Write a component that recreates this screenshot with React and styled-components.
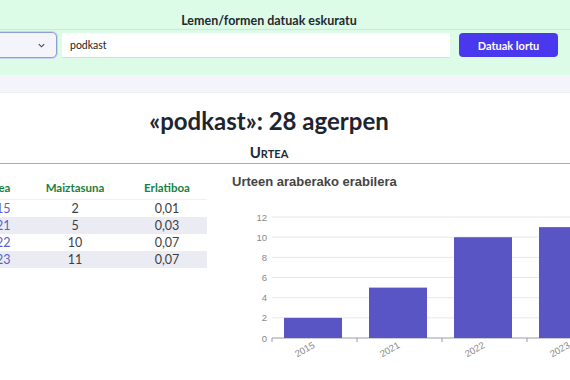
import React from "react";
import styled, { createGlobalStyle } from "styled-components";

const Global = createGlobalStyle`
  html, body { margin: 0; padding: 0; background: #fff; overflow: hidden; }
  body { width: 570px; height: 380px; font-family: "Lato", "Noto Sans", sans-serif; color: #1f2933; }
`;

const Page = styled.div`
  width: 640px;
  margin-left: -51px;
`;

const Header = styled.header`
  background: #dcfce7;
  padding: 13px 0 17px;
`;

const HeaderTitle = styled.h2`
  margin: 0;
  text-align: center;
  font-size: 12.5px;
  line-height: 15px;
  font-weight: 700;
  color: #1f2933;
`;

const FormRow = styled.form`
  display: flex;
  align-items: center;
  gap: 3px;
  margin-top: 1px;
  padding: 2px 31px 0;
  border-top: 1px solid #cfe8d6;
`;

const Select = styled.div`
  box-sizing: border-box;
  width: 77px;
  height: 26px;
  border: 1px solid #8e9fd6;
  border-radius: 5px;
  background: #f3f5fb;
  box-shadow: 0 0 0 1px #c9d3f2;
  display: flex;
  align-items: center;
  justify-content: flex-end;
  padding-right: 10px;
  color: #555;
`;

const Input = styled.div`
  box-sizing: border-box;
  flex: 1;
  height: 25px;
  margin-left: 2px;
  background: #fff;
  border-bottom: 1px solid #cfe0d6;
  display: flex;
  align-items: center;
  padding-left: 8px;
  font-size: 10.5px;
  color: #222;
`;

const Button = styled.button`
  box-sizing: border-box;
  width: 99px;
  height: 24px;
  margin-left: 6px;
  border: none;
  border-radius: 4px;
  background: #4a38ee;
  color: #fff;
  font-family: inherit;
  font-weight: 700;
  font-size: 11px;
`;

const Band = styled.div`
  height: 17px;
  background: #f3f5fa;
  border-bottom: 1px solid #eceef3;
`;

const Heading = styled.h1`
  margin: 13px 0 0;
  text-align: center;
  font-size: 24px;
  line-height: 30px;
  font-weight: 700;
  color: #1c2530;
`;

const Section = styled.h3`
  margin: 7px 0 0;
  padding-bottom: 2px;
  text-align: center;
  font-size: 15px;
  line-height: 18px;
  font-weight: 700;
  font-variant: small-caps;
  color: #1f2933;
  border-bottom: 1px solid #a2b3aa;
`;

const Results = styled.div`
  display: grid;
  grid-template-columns: 238px 1fr;
  align-items: start;
  column-gap: 13px;
  padding-left: 20px;
`;

const Table = styled.table`
  border-collapse: collapse;
  width: 238px;
  margin-top: 11px;
  font-size: 12.5px;
`;

const Th = styled.th`
  color: #16813d;
  font-weight: 700;
  font-size: 11.5px;
  height: 24px;
  padding: 0;
  border-bottom: 1px solid #eef0f3;
  text-align: center;
`;

const Tr = styled.tr`
  background: ${(p) => (p.$striped ? "#ebebf3" : "#fff")};
`;

const Td = styled.td`
  height: 17px;
  padding: 0;
  line-height: 17px;
  text-align: center;
  color: ${(p) => (p.$year ? "#5b5fc9" : "#3d3d3d")};
`;

const ChartBox = styled.div`
  padding-left: 12px;
`;

const ChartTitle = styled.div`
  margin-top: 10px;
  font-family: "Liberation Sans", Arial, sans-serif;
  font-weight: 700;
  font-size: 13px;
  line-height: 16px;
  color: #444;
`;

const Svg = styled.svg`
  display: block;
  margin-top: 16px;
  overflow: visible;
`;

const rows = [
  { y: "2015", f: 2, r: "0,01" },
  { y: "2021", f: 5, r: "0,03" },
  { y: "2022", f: 10, r: "0,07" },
  { y: "2023", f: 11, r: "0,07" },
];

function Chart() {
  const y0 = 132;
  const unit = 10.08;
  const left = 40;
  const band = 85;
  const ticks = [0, 2, 4, 6, 8, 10, 12];
  return (
    <Svg width="400" height="160" viewBox="0 0 400 160">
      {ticks.map((t) => {
        const y = y0 - t * unit;
        return (
          <g key={t}>
            <line x1={left} x2={400} y1={y} y2={y} stroke={t === 0 ? "#9a9aa6" : "#e6e6ee"} strokeWidth="1" />
            <text x={left - 5} y={y + 3.5} textAnchor="end" fontSize="9.5" fill="#888" fontFamily="Liberation Sans, Arial, sans-serif">{t}</text>
          </g>
        );
      })}
      {[0, 1, 2, 3, 4].map((i) => (
        <line key={i} x1={left + i * band} x2={left + i * band} y1={y0} y2={y0 + 4} stroke="#9a9aa6" />
      ))}
      {rows.map((r, i) => {
        const x = left + i * band + 12;
        const h = r.f * unit;
        const cx = left + i * band + band / 2;
        return (
          <g key={r.y}>
            <rect x={x} y={y0 - h} width="58" height={h} fill="#5a55c5" />
            <text
              x={cx + 1}
              y={y0 + 9}
              textAnchor="end"
              fontSize="9.5"
              fill="#888"
              fontFamily="Liberation Sans, Arial, sans-serif"
              transform={`rotate(-30 ${cx + 1} ${y0 + 9})`}
            >
              {r.y}
            </text>
          </g>
        );
      })}
    </Svg>
  );
}

function ChevronDown() {
  return (
    <svg width="9" height="9" viewBox="0 0 10 10">
      <path d="M2 3.5 L5 6.5 L8 3.5" fill="none" stroke="#444" strokeWidth="1.2" />
    </svg>
  );
}

export default function App() {
  return (
    <>
      <Global />
      <Page>
        <Header>
          <HeaderTitle>Lemen/formen datuak eskuratu</HeaderTitle>
          <FormRow onSubmit={(e) => e.preventDefault()}>
            <Select>
              <ChevronDown />
            </Select>
            <Input>podkast</Input>
            <Button type="button">Datuak lortu</Button>
          </FormRow>
        </Header>
        <Band />
        <Heading>«podkast»: 28 agerpen</Heading>
        <Section>Urtea</Section>
        <Results>
          <Table>
            <colgroup>
              <col style={{ width: "54px" }} />
              <col style={{ width: "104px" }} />
              <col style={{ width: "80px" }} />
            </colgroup>
            <thead>
              <tr>
                <Th>Urtea</Th>
                <Th>Maiztasuna</Th>
                <Th>Erlatiboa</Th>
              </tr>
            </thead>
            <tbody>
              {rows.map((r, i) => (
                <Tr key={r.y} $striped={i % 2 === 1}>
                  <Td $year>{r.y}</Td>
                  <Td>{r.f}</Td>
                  <Td>{r.r}</Td>
                </Tr>
              ))}
            </tbody>
          </Table>
          <ChartBox>
            <ChartTitle>Urteen araberako erabilera</ChartTitle>
            <Chart />
          </ChartBox>
        </Results>
      </Page>
    </>
  );
}
